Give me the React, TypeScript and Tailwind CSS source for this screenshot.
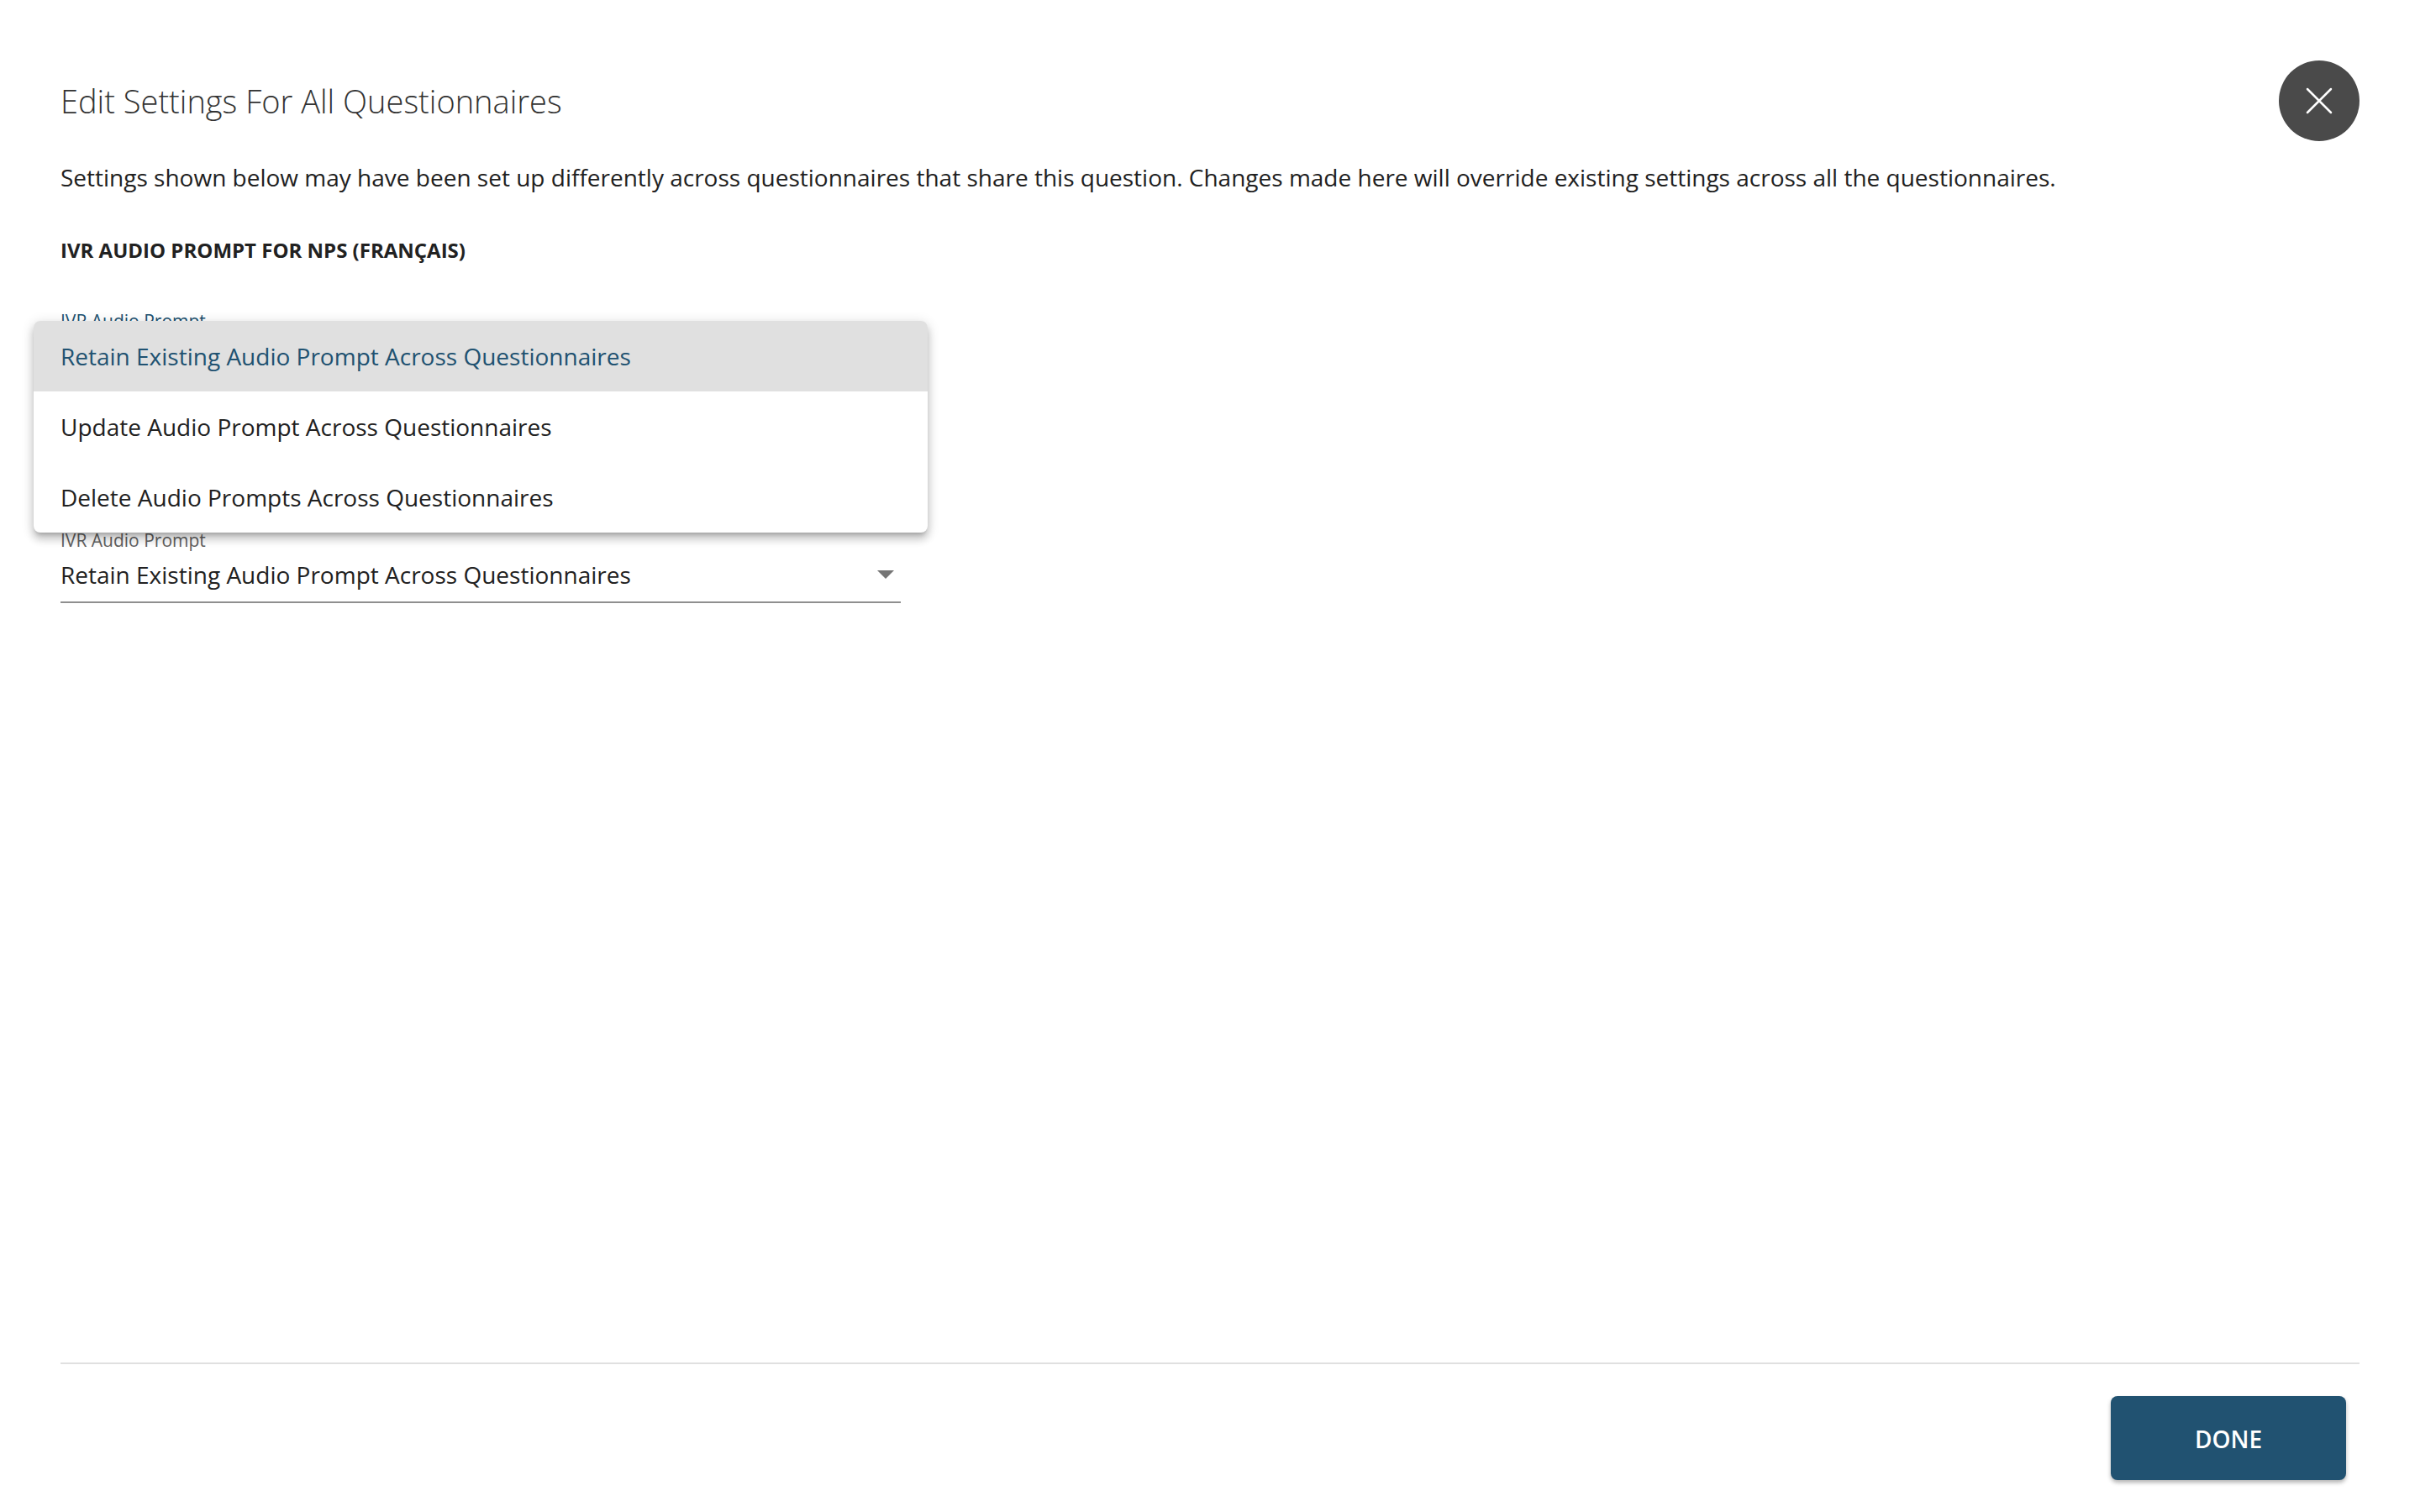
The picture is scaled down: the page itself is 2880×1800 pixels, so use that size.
import React from 'react';

const options = [
  'Retain Existing Audio Prompt Across Questionnaires',
  'Update Audio Prompt Across Questionnaires',
  'Delete Audio Prompts Across Questionnaires',
];

export default function App() {
  return (
    <div className="relative flex h-[1800px] flex-col bg-white px-[72px] font-['Open_Sans',sans-serif] text-[#212121]">
      {/* header */}
      <div className="flex items-start justify-between pt-[72px]">
        <h1 className="mt-[24px] text-[38px] leading-[48px] font-light text-[#333333]">Edit Settings For All Questionnaires</h1>
        <button className="flex h-[96px] w-[96px] items-center justify-center rounded-full bg-[#4a4a4a]">
          <svg width="32" height="32" viewBox="0 0 32 32" fill="none" stroke="white" strokeWidth="2.5" strokeLinecap="round">
            <path d="M2 2L30 30M30 2L2 30" />
          </svg>
        </button>
      </div>

      <p className="mt-[23px] text-[28px] leading-[40px]">
        Settings shown below may have been set up differently across questionnaires that share this question. Changes made here will override existing settings across all the questionnaires.
      </p>
      <h2 className="mt-[51px] text-[24px] leading-[32px] font-bold">IVR AUDIO PROMPT FOR NPS (FRANÇAIS)</h2>

      {/* fields sit behind the open menu */}
      <div className="mt-[54px] w-[1000px]">
        <div className="text-[21px] leading-[28px] text-[#215271]">IVR Audio Prompt</div>
      </div>
      <div className="mt-[233px] w-[1000px]">
        <div className="text-[21px] leading-[28px] text-[#616161]">IVR Audio Prompt</div>
        <div className="flex h-[61px] items-start justify-between border-b-2 border-[#8f8f8f] pr-[8px] text-[28px] leading-[54px]">
          <span>Retain Existing Audio Prompt Across Questionnaires</span>
          <span className="mt-[22px] h-0 w-0 border-x-[10px] border-t-[10px] border-x-transparent border-t-[#757575]" />
        </div>
      </div>

      {/* footer */}
      <div className="mt-auto pb-[38px]">
        <div className="h-[2px] bg-[#e0e0e0]" />
        <div className="mt-[38px] flex justify-end pr-[16px]">
          <button className="h-[100px] w-[280px] rounded-[8px] bg-[#215271] pt-[2px] text-[28px] font-semibold text-white shadow-[0_3px_5px_rgba(0,0,0,0.3)]">DONE</button>
        </div>
      </div>

      {/* open dropdown */}
      <ul className="absolute top-[382px] left-[40px] w-[1064px] overflow-hidden rounded-[8px] bg-white shadow-[0_5px_5px_-3px_rgba(0,0,0,0.2),0_8px_10px_1px_rgba(0,0,0,0.14),0_3px_14px_2px_rgba(0,0,0,0.12)]">
        {options.map((o, i) => (
          <li key={o} className={i === 0 ? 'flex h-[84px] items-center bg-[#e0e0e0] px-[32px] text-[28px] text-[#215271]' : 'flex h-[84px] items-center px-[32px] text-[28px]'}>
            {o}
          </li>
        ))}
      </ul>
    </div>
  );
}
